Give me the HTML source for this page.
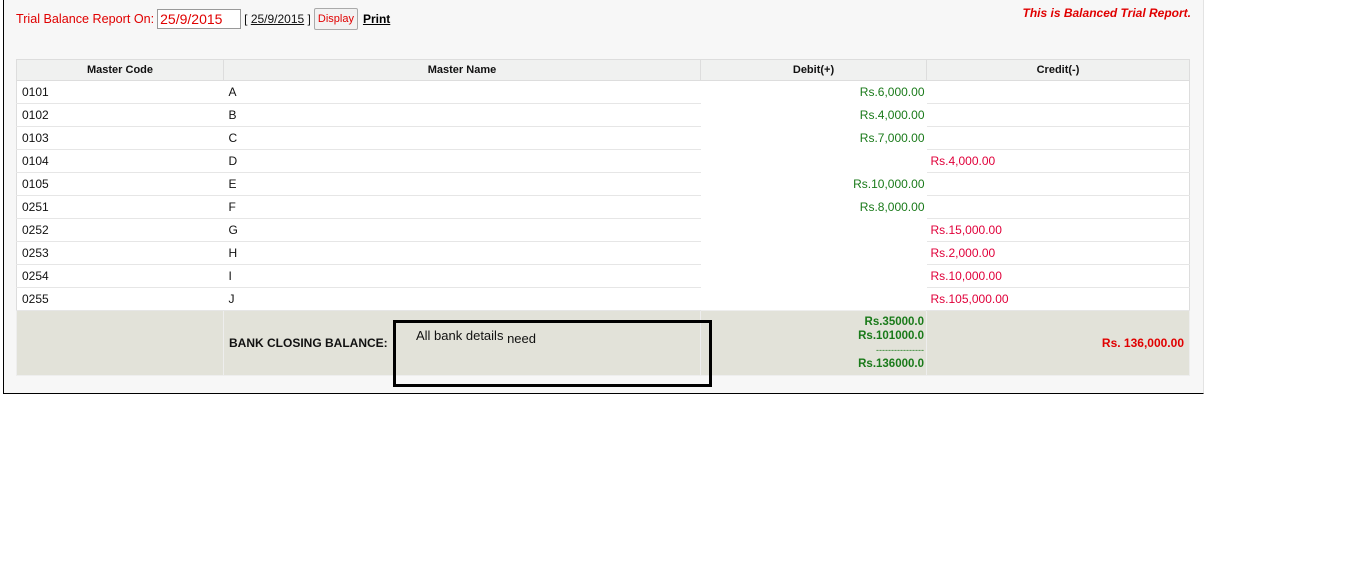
<!DOCTYPE html>
<html><head><style>
body{margin:0;width:1360px;height:571px;background:#fff;font-family:"Liberation Sans",Arial,sans-serif;position:relative;overflow:hidden}
.panel{position:absolute;left:3px;top:0;width:1199px;height:393px;background:#f7f7f7;border-left:1px solid #000;border-bottom:1px solid #000;border-right:1px solid #e3e3e3}
.top{position:absolute;left:12px;top:8px;font-size:12.6px;color:#e00000;display:flex;align-items:center}
.inp{width:80px;height:18px;border:1px solid #999;background:#fff;font-size:14px;color:#e00000;margin-left:3px;line-height:18px;padding-left:2px}
.btn{border:1px solid #aaa;border-radius:2px;background:#f2f2f2;font-size:11px;color:#e00000;padding:4px 3px;margin-left:3px}
.bal{position:absolute;right:12px;top:6px;color:#e00000;font-style:italic;font-weight:bold;font-size:12px}
table{position:absolute;left:12px;top:59px;width:1174px;table-layout:fixed;border-collapse:collapse;font-size:12px;border:1px solid #ddd}
th{background:#f0f1f0;height:20px;font-size:11px;border:1px solid #ddd;font-weight:bold;color:#111;padding:0}
td{height:22px;background:#fff;border-bottom:1px solid #e6e6e6;padding:0 5px;color:#111}
td.d{border-bottom:none;text-align:right;color:#1a7a1a;padding-right:2px}
td.c{color:#e0003a;padding-left:4px}
tr.f td{background:#e2e2d9;height:64px;border:1px solid #eee;font-weight:bold}
</style></head><body>
<div class="panel">
<div class="top">Trial Balance Report On:<div class="inp">25/9/2015</div><span style="color:#111;margin-left:3px;font-size:12px">[ <u>25/9/2015</u> ]</span><span class="btn">Display</span><b style="color:#000;margin-left:5px;text-decoration:underline;font-size:12px">Print</b></div>
<div class="bal">This is Balanced Trial Report.</div>
<table>
<colgroup><col style="width:207px"><col style="width:477px"><col style="width:226px"><col></colgroup>
<tr><th>Master Code</th><th>Master Name</th><th>Debit(+)</th><th>Credit(-)</th></tr>
<tr><td>0101</td><td>A</td><td class="d">Rs.6,000.00</td><td class="c"></td></tr>
<tr><td>0102</td><td>B</td><td class="d">Rs.4,000.00</td><td class="c"></td></tr>
<tr><td>0103</td><td>C</td><td class="d">Rs.7,000.00</td><td class="c"></td></tr>
<tr><td>0104</td><td>D</td><td class="d"></td><td class="c">Rs.4,000.00</td></tr>
<tr><td>0105</td><td>E</td><td class="d">Rs.10,000.00</td><td class="c"></td></tr>
<tr><td>0251</td><td>F</td><td class="d">Rs.8,000.00</td><td class="c"></td></tr>
<tr><td>0252</td><td>G</td><td class="d"></td><td class="c">Rs.15,000.00</td></tr>
<tr><td>0253</td><td>H</td><td class="d"></td><td class="c">Rs.2,000.00</td></tr>
<tr><td>0254</td><td>I</td><td class="d"></td><td class="c">Rs.10,000.00</td></tr>
<tr><td>0255</td><td>J</td><td class="d"></td><td class="c">Rs.105,000.00</td></tr>
<tr class="f"><td></td><td style="font-size:12px">BANK CLOSING BALANCE:</td><td style="text-align:right;color:#1a7a1a;font-size:11.5px;line-height:14px;padding-right:2px">Rs.35000.0<br>Rs.101000.0<br><span style="font-weight:normal;font-size:9px">----------------</span><br>Rs.136000.0</td><td style="text-align:right;color:#e00000">Rs. 136,000.00</td></tr>
</table>
</div>
<div style="position:absolute;left:393px;top:320px;width:313px;height:61px;border:3px solid #000"></div>
<div style="position:absolute;left:416px;top:328px;font-size:13px;color:#111">All bank details <span style="position:relative;top:3px">need</span></div>
</body></html>
